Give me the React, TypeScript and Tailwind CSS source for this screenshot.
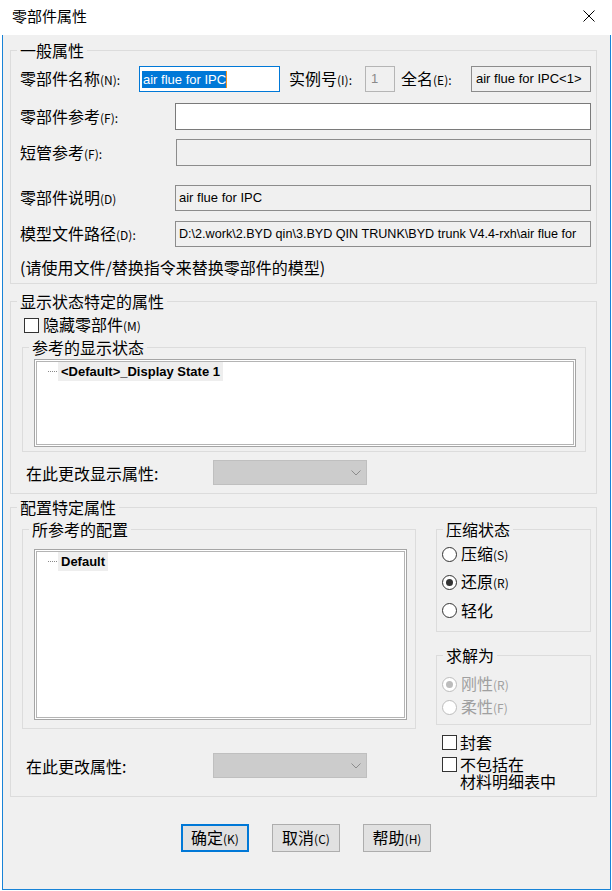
import React from "react";

const zh = "font-['Noto_Sans_CJK_SC','Noto_Sans',sans-serif]";
const lat = "font-['Liberation_Sans','Arial',sans-serif]";

function Lbl({ t, k, className = "", color = "text-black" }: { t: string; k?: string; className?: string; color?: string }) {
  return (
    <span className={`shrink-0 text-[16px] leading-[20px] whitespace-nowrap ${color} ${className}`}>
      {t}
      {k && <span className="text-[12px]">{k}</span>}
    </span>
  );
}

function Group({ title, className = "", children }: { title: string; className?: string; children: React.ReactNode }) {
  return (
    <fieldset className={`min-w-0 shrink-0 border border-[#dcdcdc] ${className}`}>
      <legend className="ml-[6px] px-[3px] text-[16px] leading-[20px] text-black">{title}</legend>
      {children}
    </fieldset>
  );
}

function Combo() {
  return (
    <div className="w-[154px] h-[25px] bg-[#cccccc] border border-[#bfbfbf] flex items-center justify-end pr-[5px] shrink-0">
      <svg width="10" height="6" viewBox="0 0 10 6">
        <path d="M0.5 0.5 L5 5 L9.5 0.5" fill="none" stroke="#8c8c8c" strokeWidth="1" />
      </svg>
    </div>
  );
}

function ListBox({ className, item }: { className: string; item: string }) {
  return (
    <div className={`border border-[#a5a5a5] bg-white p-[1px] ${className}`}>
      <div className="h-full border border-[#b4b4b4] bg-white">
        <div className="flex items-center h-[19px]">
          <span className="ml-[11px] w-[9px] border-t border-dotted border-[#8a8a8a]" />
          <span className={`ml-[1px] h-full px-[3px] bg-[#eeeeee] flex items-center font-bold text-[13px] text-black ${lat}`}>
            {item}
          </span>
        </div>
      </div>
    </div>
  );
}

function Radio({ label, k, checked = false, disabled = false, className = "" }: { label: string; k?: string; checked?: boolean; disabled?: boolean; className?: string }) {
  return (
    <div className={`flex items-center h-[20px] ${className}`}>
      <span
        className={`w-[15px] h-[15px] rounded-full border bg-white flex items-center justify-center shrink-0 ${
          disabled ? "border-[#bcbcbc]" : "border-[#333333]"
        }`}
      >
        {checked && <span className={`w-[7px] h-[7px] rounded-full ${disabled ? "bg-[#bcbcbc]" : "bg-[#333333]"}`} />}
      </span>
      <Lbl t={label} k={k} className="ml-[4px]" color={disabled ? "text-[#a0a0a0]" : "text-black"} />
    </div>
  );
}

function CheckBox({ className = "" }: { className?: string }) {
  return <span className={`w-[15px] h-[15px] border border-[#333333] bg-white shrink-0 ${className}`} />;
}

function Button({ label, k, primary = false }: { label: string; k: string; primary?: boolean }) {
  return (
    <div
      className={`w-[68px] h-[28px] bg-[#e1e1e1] flex items-center justify-center ${
        primary ? "border-2 border-[#0078d7]" : "border border-[#adadad]"
      }`}
    >
      <Lbl t={label} k={k} />
    </div>
  );
}

export default function App() {
  return (
    <div className={`relative w-[612px] h-[891px] bg-white overflow-hidden ${zh}`}>
      {/* Title bar */}
      <div className="h-[35px] flex items-center justify-between pl-[12px] pr-[17px] pb-[3px]">
        <span className="text-[15px] leading-[20px] text-black">零部件属性</span>
        <svg width="12" height="12" viewBox="0 0 12 12">
          <path d="M0.5 0.5L11.5 11.5M11.5 0.5L0.5 11.5" stroke="#000" strokeWidth="1" />
        </svg>
      </div>

      {/* Body */}
      <div className="ml-[2px] w-[609px] h-[855px] border-x border-b border-[#1883d7] bg-[#f0f0f0] pl-[7px] pt-[5px]">
        {/* 一般属性 */}
        <Group title="一般属性" className="w-[587px]">
          <div className="pl-[9px] pt-[6px] pb-[6px]">
            <div className="flex items-center h-[26px]">
              <Lbl t="零部件名称" k="(N):" className="w-[119px]" />
              <div className="w-[141px] h-[26px] bg-white border border-[#0078d7] flex items-center pl-[2px] shrink-0">
                <span className={`${lat} text-[13px] leading-[17px] bg-[#0078d7] text-white pl-[1px] whitespace-nowrap`}>
                  air flue for IPC
                </span>
                <span className="w-[1px] h-[17px] bg-[#f7931e]" />
              </div>
              <Lbl t="实例号" k="(I):" className="ml-[9px] w-[76px]" />
              <div className={`w-[30px] h-[26px] border border-[#b5b5b5] flex items-center pl-[5px] text-[#8a8a8a] text-[13px] shrink-0 ${lat}`}>
                1
              </div>
              <Lbl t="全名" k="(E):" className="ml-[6px] w-[70px]" />
              <div className={`w-[120px] h-[26px] border border-[#8c8c8c] flex items-center pl-[4px] text-[13px] text-black whitespace-nowrap overflow-hidden shrink-0 ${lat}`}>
                air flue for IPC&lt;1&gt;
              </div>
            </div>

            <div className="flex items-center h-[27px] mt-[11px]">
              <Lbl t="零部件参考" k="(F):" className="w-[155px]" />
              <div className="w-[416px] h-[27px] bg-white border border-[#7a7a7a] shrink-0" />
            </div>

            <div className="flex items-center h-[27px] mt-[9px]">
              <Lbl t="短管参考" k="(F):" className="w-[156px]" />
              <div className="w-[415px] h-[27px] border border-[#8c8c8c] shrink-0" />
            </div>

            <div className="flex items-center h-[26px] mt-[19px]">
              <Lbl t="零部件说明" k="(D)" className="w-[155px]" />
              <div className={`w-[416px] h-[26px] border border-[#8c8c8c] flex items-center pl-[3px] text-[13px] text-black whitespace-nowrap overflow-hidden shrink-0 ${lat}`}>
                air flue for IPC
              </div>
            </div>

            <div className="flex items-center h-[26px] mt-[10px]">
              <Lbl t="模型文件路径" k="(D):" className="w-[155px]" />
              <div className={`w-[416px] h-[26px] border border-[#8c8c8c] flex items-center pl-[3px] text-[12.6px] text-black whitespace-nowrap overflow-hidden shrink-0 ${lat}`}>
                D:\2.work\2.BYD qin\3.BYD QIN TRUNK\BYD trunk V4.4-rxh\air flue for
              </div>
            </div>

            <div className="h-[20px] mt-[10px] flex items-center">
              <Lbl t="(请使用文件/替换指令来替换零部件的模型)" />
            </div>
          </div>
        </Group>

        {/* 显示状态特定的属性 */}
        <Group title="显示状态特定的属性" className="w-[587px] mt-[7px]">
          <div className="pl-[11px] pt-[4px] pb-[8px]">
            <div className="flex items-center h-[20px] ml-[2px]">
              <CheckBox />
              <Lbl t="隐藏零部件" k="(M)" className="ml-[4px]" />
            </div>
            <Group title="参考的显示状态" className="w-[564px] mt-[2px]">
              <div className="pl-[11px] pt-[2px] pb-[4px]">
                <ListBox className="w-[542px] h-[88px]" item="<Default>_Display State 1" />
              </div>
            </Group>
            <div className="flex items-center h-[25px] mt-[8px]">
              <Lbl t="在此更改显示属性:" className="ml-[4px] w-[187px]" />
              <Combo />
            </div>
          </div>
        </Group>

        {/* 配置特定属性 */}
        <Group title="配置特定属性" className="w-[587px] mt-[3px]">
          <div className="pl-[11px] pt-[2px] pb-[6px] flex items-start">
            <div className="w-[394px] shrink-0">
              <Group title="所参考的配置" className="w-[394px]">
                <div className="pl-[11px] pt-[10px] pb-[8px]">
                  <ListBox className="w-[373px] h-[171px]" item="Default" />
                </div>
              </Group>
              <div className="flex items-center h-[25px] mt-[24px]">
                <Lbl t="在此更改属性:" className="ml-[4px] w-[187px]" />
                <Combo />
              </div>
            </div>

            <div className="ml-[20px] w-[155px] shrink-0">
              <Group title="压缩状态" className="w-[155px]">
                <div className="pl-[5px] pt-[5px] pb-[11px] flex flex-col gap-[8px]">
                  <Radio label="压缩" k="(S)" />
                  <Radio label="还原" k="(R)" checked />
                  <Radio label="轻化" />
                </div>
              </Group>
              <Group title="求解为" className="w-[155px] mt-[13px]">
                <div className="pl-[5px] pt-[9px] pb-[7px] flex flex-col gap-[3px]">
                  <Radio label="刚性" k="(R)" checked disabled />
                  <Radio label="柔性" k="(F)" disabled />
                </div>
              </Group>
              <div className="flex items-center h-[20px] mt-[7px] ml-[6px]">
                <CheckBox />
                <Lbl t="封套" className="ml-[3px]" />
              </div>
              <div className="flex items-start mt-[4px] ml-[6px]">
                <CheckBox className="mt-[1px]" />
                <span className="ml-[3px] text-[16px] leading-[17px] text-black">
                  不包括在
                  <br />
                  材料明细表中
                </span>
              </div>
            </div>
          </div>
        </Group>

        {/* Buttons */}
        <div className="flex gap-[23px] pl-[171px] mt-[27px]">
          <Button label="确定" k="(K)" primary />
          <Button label="取消" k="(C)" />
          <Button label="帮助" k="(H)" />
        </div>
      </div>
    </div>
  );
}
